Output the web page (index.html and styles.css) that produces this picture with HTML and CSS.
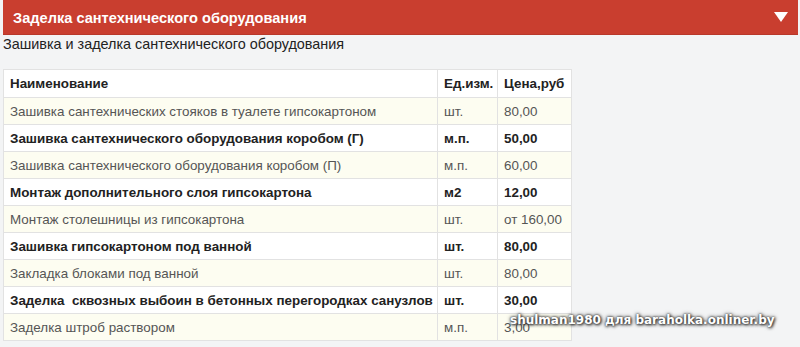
FILE: index.html
```html
<!DOCTYPE html>
<html lang="ru">
<head>
<meta charset="utf-8">
<link rel="stylesheet" href="styles.css">
</head>
<body>
<div class="page">
  <div class="bar">
    <span class="bar-title">Заделка сантехнического оборудования</span>
    <span class="bar-arrow"></span>
  </div>
  <div class="subtitle">Зашивка и заделка сантехнического оборудования</div>
  <table class="price">
    <colgroup><col class="c-name"><col class="c-unit"><col class="c-price"></colgroup>
    <thead>
      <tr><th>Наименование</th><th>Ед.изм.</th><th>Цена,руб</th></tr>
    </thead>
    <tbody>
      <tr class="odd"><td>Зашивка сантехнических стояков в туалете гипсокартоном</td><td>шт.</td><td>80,00</td></tr>
      <tr class="even"><td>Зашивка сантехнического оборудования коробом (Г)</td><td>м.п.</td><td>50,00</td></tr>
      <tr class="odd"><td>Зашивка сантехнического оборудования коробом (П)</td><td>м.п.</td><td>60,00</td></tr>
      <tr class="even"><td>Монтаж дополнительного слоя гипсокартона</td><td>м2</td><td>12,00</td></tr>
      <tr class="odd"><td>Монтаж столешницы из гипсокартона</td><td>шт.</td><td>от 160,00</td></tr>
      <tr class="even"><td>Зашивка гипсокартоном под ванной</td><td>шт.</td><td>80,00</td></tr>
      <tr class="odd"><td>Закладка блоками под ванной</td><td>шт.</td><td>80,00</td></tr>
      <tr class="even"><td>Заделка &nbsp;сквозных выбоин в бетонных перегородках санузлов</td><td>шт.</td><td>30,00</td></tr>
      <tr class="odd"><td>Заделка штроб раствором</td><td>м.п.</td><td>3,00</td></tr>
    </tbody>
  </table>
  <div class="watermark">shulman1980 для baraholka.onliner.by</div>
</div>
</body>
</html>
```
FILE: styles.css
```css
html, body {
  margin: 0;
  padding: 0;
  background: #f3f4f5;
}
body {
  font-family: "Liberation Sans", Arial, sans-serif;
  color: #222;
}
.page {
  position: relative;
  width: 800px;
  height: 347px;
  overflow: hidden;
  padding-left: 3px;
  box-sizing: border-box;
}
.bar {
  height: 35px;
  width: 795px;
  background: #c93e2f;
  border-bottom: 1px solid #b8382a;
  box-sizing: border-box;
  display: flex;
  align-items: center;
  justify-content: space-between;
  padding: 0 10px 0 10px;
}
.bar-title {
  color: #fff;
  font-weight: bold;
  font-size: 14.6px;
  padding-top: 1px;
}
.bar-arrow {
  width: 0;
  height: 0;
  border-left: 7px solid transparent;
  border-right: 7px solid transparent;
  border-top: 10px solid #fff;
}
.subtitle {
  font-size: 14.4px;
  color: #222;
  padding-top: 1px;
  height: 33px;
  line-height: 17px;
}
.price {
  border-collapse: collapse;
  table-layout: fixed;
  width: 568px;
  background: #fff;
  font-size: 13.4px;
}
.c-name { width: 434px; }
.c-unit { width: 60px; }
.c-price { width: 74px; }
.price th, .price td {
  border: 1px solid #e2e2e2;
  height: 26px;
  padding: 0 6px;
  text-align: left;
  white-space: nowrap;
  overflow: visible;
}
.price th {
  font-weight: bold;
  color: #222;
  height: 27px;
}
.price tr.odd td {
  background: #fdfdf1;
  color: #555;
}
.price tr.even td {
  background: #fff;
  font-weight: bold;
  color: #222;
}
.watermark {
  position: absolute;
  left: 510px;
  top: 313px;
  white-space: nowrap;
  color: #fff;
  font-weight: bold;
  font-size: 12px;
  font-family: "DejaVu Sans", sans-serif;
  text-shadow: 0 0 2px #333, 0 0 4px #444, 1px 1px 3px #222;
}
```
